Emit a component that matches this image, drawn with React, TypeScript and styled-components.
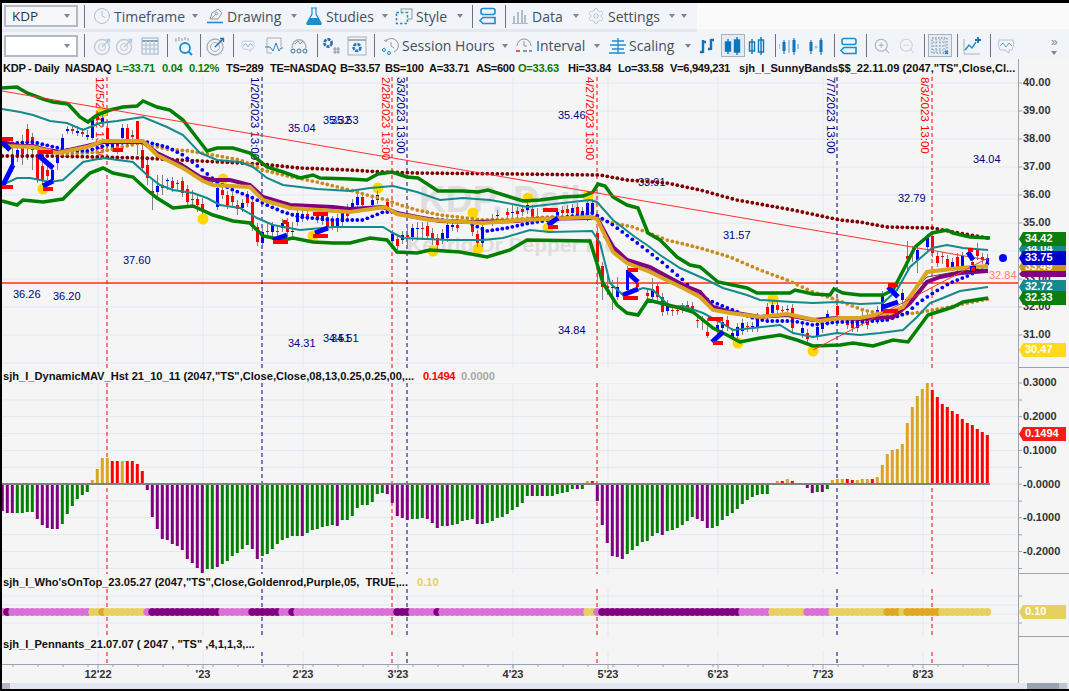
import styled, { createGlobalStyle } from "styled-components";
import { Clock, Settings, ZoomIn, ZoomOut } from "lucide-react";

const GlobalStyle = createGlobalStyle`
	html, body {
		margin: 0;
		padding: 0;
		background: #000;
		overflow: hidden;
	}
`;

const Frame = styled.div`
	width: 1069px;
	height: 691px;
	box-sizing: border-box;
	border-top: 3px solid #000;
	border-left: 2px solid #000;
	border-bottom: 2px solid #000;
	background: #fafafa;
	display: flex;
	flex-direction: column;
	font-family: "Liberation Sans", Arial, sans-serif;
	overflow: hidden;
`;

const ToolRow = styled.div<{ $w?: number; $h: number }>`
	display: flex;
	align-items: center;
	flex: none;
	width: ${(p) => (p.$w ? `${p.$w}px` : "100%")};
	height: ${(p) => p.$h}px;
	box-sizing: border-box;
	padding-left: 2px;
	background: #f1f4f9;
`;

const TopStrip = styled.div`
	height: 3px;
	flex: none;
	background: linear-gradient(to right, #e3e8f1 695px, #f3f5f8 695px);
`;

const Combo = styled.div<{ $bg: string }>`
	width: 74px;
	height: 22px;
	flex: none;
	box-sizing: border-box;
	border: 2px solid #b4bac4;
	background: ${(p) => p.$bg};
	display: flex;
	align-items: center;
	justify-content: space-between;
	padding: 0 6px;
	font-family: "Open Sans", sans-serif;
	font-size: 13.5px;
	color: #2d3540;
`;

const Sep = styled.div<{ $ml: number }>`
	width: 1px;
	height: 23px;
	flex: none;
	margin-left: ${(p) => p.$ml}px;
	background: #6c7480;
`;

const Slot = styled.div<{ $ml: number; $w?: number; $active?: boolean }>`
	width: ${(p) => p.$w ?? 22}px;
	height: 23px;
	flex: none;
	margin-left: ${(p) => p.$ml}px;
	box-sizing: border-box;
	display: flex;
	align-items: center;
	justify-content: center;
	border: ${(p) => (p.$active ? "1px solid #a9b1bc" : "none")};
	background: ${(p) => (p.$active ? "#e6ebf2" : "transparent")};
`;

const Label = styled.span<{ $w: number }>`
	width: ${(p) => p.$w}px;
	flex: none;
	margin-left: 3px;
	white-space: nowrap;
	font-family: "Open Sans", sans-serif;
	font-size: 14px;
	color: #45505c;
`;

const Caret = styled.span<{ $ml: number }>`
	width: 0;
	height: 0;
	flex: none;
	margin-left: ${(p) => p.$ml}px;
	border-left: 3.5px solid transparent;
	border-right: 3.5px solid transparent;
	border-top: 4px solid #7c8590;
`;

const Overflow = styled.div`
	margin-left: 34px;
	display: flex;
	flex-direction: column;
	align-items: center;
	gap: 4px;
	font-size: 12px;
	line-height: 10px;
	color: #7c8590;
`;

const Pane = styled.div<{ $h: number }>`
	height: ${(p) => p.$h}px;
	flex: none;
	display: grid;
	grid-template-columns: 1016px 1fr;
	background: #f5f5f5;
`;

const PlotColumn = styled.div`
	display: flex;
	flex-direction: column;
	min-width: 0;
`;

const Legend = styled.div<{ $h: number }>`
	height: ${(p) => p.$h}px;
	flex: none;
	display: flex;
	align-items: center;
	padding-left: 1px;
	white-space: pre;
	overflow: hidden;
	font-size: 11.1px;
	font-weight: bold;
	color: #111;
`;

const LegendItem = styled.span<{ $w?: number; $c?: string }>`
	flex: none;
	width: ${(p) => (p.$w ? `${p.$w}px` : "auto")};
	color: ${(p) => p.$c ?? "#111"};
	letter-spacing: ${(p) => (p.$w && p.$w < 100 ? "-0.3px" : "0")};
`;

const PlotSvg = styled.svg`
	display: block;
	flex: 1;
	min-height: 0;
	width: 1016px;
`;

const AxisColumn = styled.div<{ $line?: boolean }>`
	box-sizing: border-box;
	border-left: 1px solid #9aa3b2;
	border-bottom: ${(p) => (p.$line ? "1px solid #9aa3b2" : "none")};
	min-height: 0;
`;

const AxisSvg = styled.svg`
	display: block;
	width: 50px;
	height: 100%;
	overflow: visible;
`;

const TimeBar = styled.div`
	height: 19px;
	flex: none;
	display: grid;
	grid-template-columns: 1016px 1fr;
	background: #f5f5f5;
`;

const TimeSvg = styled.svg`
	display: block;
	width: 1016px;
	height: 19px;
`;

const ScrollBar = styled.div`
	height: 6px;
	flex: none;
	display: flex;
	background: #e2e6f0;
`;

const ScrollThumb = styled.div<{ $w: number; $ml: number; $c: string }>`
	width: ${(p) => p.$w}px;
	margin-left: ${(p) => p.$ml}px;
	background: ${(p) => p.$c};
`;

const TickText = styled.text`
	font-family: "Liberation Sans", Arial, sans-serif;
	font-size: 11px;
	font-weight: bold;
	fill: #333;
	dominant-baseline: middle;
`;

const PillText = styled.text`
	font-family: "Liberation Sans", Arial, sans-serif;
	font-size: 11px;
	font-weight: bold;
	fill: #fff;
	dominant-baseline: middle;
`;

const Note = styled.text`
	font-family: "Liberation Sans", Arial, sans-serif;
	font-size: 11px;
	fill: #000080;
	dominant-baseline: middle;
`;

const DateNote = styled.text<{ $c: string }>`
	font-family: "Liberation Sans", Arial, sans-serif;
	font-size: 11.5px;
	fill: ${(p) => p.$c};
	dominant-baseline: middle;
`;

const CloseTag = styled.text`
	font-family: "Liberation Sans", Arial, sans-serif;
	font-size: 11px;
	fill: #ff7f6a;
	dominant-baseline: middle;
`;

const Watermark = styled.text<{ $size: number }>`
	font-family: "Liberation Sans", Arial, sans-serif;
	font-size: ${(p) => p.$size}px;
	font-weight: bold;
	fill: #dedede;
`;

const RED = "#ff0000";
const NAVY = "#000080";
const BLUE = "#1b8ed1";
const PALE = "#b4bcc6";
const GREY = "#8d96a1";
const LINE = "#e1e7f2";
const AXIS = "#9aa3b2";

const monthLines = [98, 203, 303, 398, 513, 608, 718, 823, 923];
const months = ["12'22", "'23", "2'23", "3'23", "4'23", "5'23", "6'23", "7'23", "8'23"];
const dashes: [number, string][] = [
	[107, RED],
	[262, NAVY],
	[392, RED],
	[407, NAVY],
	[597, RED],
	[837, NAVY],
	[932, RED],
];

const barX = (k: number) => 2.3 + 5 * k;

const greenTop =
	"2,88 17,87 27,93 43,99 53,102 68,104 80,117 88,122 97,115 110,110 123,107 137,106 143,101 157,107 170,110 183,120 197,138 207,151 217,148 233,148 250,153 267,167 283,172 300,178 313,175 320,178 350,179 367,180 378,174 392,172 407,177 418,178 438,191 463,191 478,192 488,190 507,196 523,201 540,200 563,197 583,196 593,192 598,184 605,186 613,197 627,205 638,208 648,233 660,240 677,257 690,265 700,267 718,282 747,288 757,293 790,293 795,290 813,294 830,295 834,289 843,293 860,295 883,295 893,290 905,267 915,247 932,233 947,230 953,233 970,237 990,238";
const tealTop =
	"2,109 20,112 33,115 50,121 67,123 83,130 100,123 117,121 143,117 167,127 183,135 200,153 217,160 240,162 253,167 267,178 283,185 317,189 350,191 370,188 393,186 417,192 440,200 463,198 490,200 507,203 527,207 563,203 590,200 597,202 613,220 635,237 647,245 660,255 680,268 707,280 723,288 747,295 760,300 793,302 813,303 837,302 860,304 883,303 897,290 910,267 932,248 947,245 963,248 988,250";
const tealLow =
	"2,185 17,178 30,178 50,182 63,180 83,162 103,158 133,162 147,175 160,185 173,190 193,193 207,198 220,205 240,208 257,218 273,225 300,230 333,227 350,227 383,227 393,233 403,238 450,240 483,240 503,238 530,230 550,232 592,231 600,243 610,283 623,295 643,288 653,290 670,307 683,306 703,313 720,322 733,330 753,328 780,325 793,333 813,337 837,333 860,335 880,333 903,330 917,317 930,303 943,298 960,291 988,287";
const greenLow =
	"2,201 17,205 23,200 43,202 63,199 77,185 90,173 103,168 113,173 133,177 147,190 157,198 173,208 193,206 213,215 233,221 250,223 263,236 283,240 293,238 313,242 333,243 350,243 370,238 387,240 397,252 417,253 430,250 460,252 487,257 510,250 527,240 590,241 603,283 617,305 627,313 638,315 648,300 660,303 680,308 693,312 713,328 727,335 740,342 760,338 780,335 797,340 813,346 840,345 853,343 873,346 893,340 908,342 928,315 953,307 963,302 988,298";
const purpleLine =
	"2,142 20,146 33,146 47,150 60,152 87,146 103,142 143,142 157,153 180,164 200,177 213,180 230,180 250,185 263,197 290,205 333,207 350,209 383,207 397,213 417,217 440,221 473,222 517,221 537,219 590,218 597,218 613,247 627,260 650,267 683,285 700,292 713,307 730,312 760,317 787,315 813,320 837,318 860,319 893,317 910,303 927,282 940,277 960,273 988,271";
const goldLine =
	"2,146 33,147 57,153 87,147 103,141 143,141 157,155 183,168 203,181 213,185 250,187 263,200 290,208 350,212 385,207 397,214 430,220 483,223 523,220 590,217 597,219 613,252 627,263 650,272 683,288 700,297 713,310 730,313 760,317 787,314 820,321 840,318 860,318 890,312 903,307 927,272 960,268 988,266";
const blackLines = [
	"157,154 183,166 203,179 213,183",
	"255,191 263,198 290,207",
	"603,236 613,250 627,262 650,270 683,287 700,295 713,308",
	"905,300 927,277 960,271 988,269",
];
const blueDots =
	"2,144 33,142 67,150 87,151 100,147 113,143 147,142 167,147 183,155 200,168 217,182 233,190 253,198 267,205 283,212 300,217 333,220 363,220 383,212 393,212 403,215 420,218 467,222 487,231 507,228 530,223 567,217 593,213 613,225 640,245 663,263 683,280 697,295 720,305 753,318 767,321 793,321 813,325 837,322 860,322 887,320 907,313 918,303 933,293 950,283 970,275 988,263";
const orangeDots =
	"60,154 100,152 140,143 167,149 190,151 213,155 240,160 263,170 283,175 317,182 350,190 367,195 387,200 400,205 417,210 440,215 467,218 483,220 517,219 550,217 593,217 613,223 633,227 667,240 700,248 730,257 760,270 787,280 813,292 837,300 863,310 877,313 897,315 915,313 933,310 950,307 967,303 988,299";
const maroonDots =
	"2,156 50,156 143,158 200,161 260,164 300,168 350,170 383,172 417,173 517,174 600,175 627,180 667,183 700,190 737,200 793,210 840,220 860,222 887,227 933,228 953,232 970,235 988,238";

// one dot per bar, read off the polyline
const dotsOn = (line: string) => {
	const pts = line.split(" ").map((p) => p.split(",").map(Number));
	const out: [number, number][] = [];
	for (let k = 0; k < 198; k++) {
		const x = barX(k);
		for (let i = 1; i < pts.length; i++) {
			if (x >= pts[i - 1][0] && x <= pts[i][0]) {
				const t = (x - pts[i - 1][0]) / (pts[i][0] - pts[i - 1][0]);
				out.push([x, pts[i - 1][1] + t * (pts[i][1] - pts[i - 1][1])]);
				break;
			}
		}
	}
	return out;
};

const yellows = [
	[43, 189], [203, 219], [223, 179], [102, 112], [313, 236], [378, 188], [433, 251], [473, 213],
	[478, 249], [528, 198], [548, 228], [588, 196], [773, 299], [738, 343], [813, 351],
];

// flag bars: x1, x2, y
const flagBars = [
	[2, 13, 139], [2, 13, 187], [38, 53, 152], [43, 53, 189], [113, 123, 150], [273, 288, 242],
	[283, 287, 222], [313, 328, 214], [313, 328, 236], [543, 558, 210], [548, 558, 227],
	[628, 638, 270], [623, 638, 298], [708, 723, 319], [713, 723, 343], [888, 898, 285],
	[883, 898, 311], [968, 973, 250],
];
const flagPoles = [
	[2, 142, 10, 150], [3, 185, 13, 165], [38, 155, 53, 168], [43, 186, 53, 181], [273, 240, 287, 235],
	[315, 233, 328, 228], [548, 225, 558, 218], [628, 273, 638, 282], [623, 295, 638, 289],
	[712, 342, 723, 332], [888, 287, 898, 297], [883, 307, 898, 302], [968, 252, 973, 260],
];

// x, top, bottom, colour, wick top, wick bottom
type Candle = [number, number, number, "r" | "b", number?, number?];
const candles: Candle[] = [
	[13, 155, 165, "b", 148, 172], [18, 150, 157, "b", 142, 162], [23, 147, 154, "r", 135, 165],
	[28, 129, 143, "r", 124, 160], [33, 137, 150, "r", 133, 170], [38, 155, 180, "r", 150, 183],
	[43, 166, 180, "r"], [48, 170, 176, "r"], [53, 170, 180, "b"], [58, 153, 163, "b", 150, 170],
	[63, 138, 150, "b"], [68, 129, 131, "b", 126, 134], [73, 129, 131, "r", 126, 134], [78, 131, 133, "b", 126, 136],
	[83, 132, 134, "r", 128, 137], [88, 135, 137, "b", 130, 140], [93, 120, 138, "b", 118, 140],
	[98, 115, 120, "r"], [103, 118, 123, "b"], [108, 128, 145, "r", 120, 148], [113, 143, 148, "b"],
	[118, 143, 150, "r"], [123, 128, 138, "b"], [128, 128, 140, "r"], [133, 135, 137, "r", 130, 142],
	[138, 121, 142, "r", 121, 155], [143, 150, 168, "r", 140, 172], [148, 165, 178, "r", 160, 185],
	[153, 191, 193, "r", 180, 210], [158, 186, 192, "b", 175, 198], [163, 185, 188, "r", 175, 195],
	[168, 180, 181, "b", 178, 190], [173, 181, 188, "r"], [178, 183, 184, "r", 180, 190], [183, 181, 193, "r"],
	[188, 189, 202, "r"], [193, 199, 200, "r", 190, 205], [198, 199, 205, "r", 195, 212], [203, 204, 210, "r", 198, 214],
	[218, 188, 207, "b", 185, 210], [223, 190, 195, "r"], [228, 195, 205, "r"], [233, 196, 202, "r"],
	[238, 205, 209, "r", 200, 215], [243, 203, 208, "b"], [248, 195, 203, "r"], [253, 202, 227, "r"],
	[258, 227, 242, "r"], [263, 232, 243, "b", 228, 245], [268, 231, 232, "r", 222, 238], [273, 225, 232, "b", 222, 240],
	[278, 231, 232, "r"], [283, 223, 228, "b"], [288, 222, 232, "r"], [293, 231, 232, "b", 222, 240],
	[298, 213, 222, "b", 208, 226], [303, 214, 218, "b"], [308, 214, 217, "r"], [318, 214, 219, "r"], [323, 215, 221, "b"],
	[328, 217, 227, "r"], [333, 220, 226, "r"], [338, 218, 228, "b"], [343, 210, 222, "b"], [348, 208, 216, "r"],
	[353, 203, 208, "b"], [358, 197, 205, "b"], [363, 197, 205, "r"], [373, 200, 205, "b"], [378, 195, 200, "b"],
	[388, 202, 207, "r"], [393, 234, 241, "b", 230, 245], [398, 239, 246, "r", 235, 250], [403, 235, 240, "b"],
	[408, 235, 237, "r", 228, 245], [413, 228, 237, "b"], [418, 228, 229, "b", 222, 240], [423, 228, 229, "r", 222, 240],
	[428, 226, 236, "r"], [433, 233, 240, "r", 228, 245], [438, 238, 245, "r"], [443, 233, 240, "b"],
	[448, 225, 238, "b"], [453, 225, 227, "b"], [458, 225, 228, "r"], [473, 225, 232, "r"], [478, 234, 243, "r"],
	[483, 227, 243, "b"], [493, 218, 222, "r"], [498, 215, 216, "b", 210, 222], [508, 212, 215, "r"], [513, 212, 213, "b", 205, 218],
	[518, 211, 214, "r"], [523, 209, 212, "r"], [528, 205, 210, "b"], [533, 209, 217, "r"], [538, 216, 217, "r", 208, 222],
	[558, 212, 217, "b"], [563, 210, 213, "r"], [568, 209, 213, "r"], [573, 208, 213, "b"], [578, 207, 215, "r"],
	[583, 211, 214, "b"], [588, 203, 217, "b"], [593, 203, 212, "b"],
	[598, 233, 262, "r", 228, 285], [603, 266, 287, "r", 262, 300], [608, 286, 288, "r", 275, 295], [613, 287, 288, "b", 280, 310],
	[618, 287, 297, "b", 277, 300], [628, 270, 290, "b"], [638, 283, 287, "r"], [648, 293, 296, "r"], [653, 290, 297, "b", 278, 300],
	[658, 286, 297, "r"], [663, 297, 312, "r"], [668, 304, 311, "b"], [673, 310, 311, "r", 305, 316], [678, 310, 311, "r", 306, 315],
	[683, 307, 309, "r"], [688, 305, 308, "r"], [693, 306, 310, "r"], [698, 320, 321, "r", 316, 328], [703, 320, 321, "r", 316, 330],
	[708, 332, 336, "r", 318, 338], [718, 325, 331, "b"], [723, 322, 328, "b"], [728, 320, 327, "r"], [733, 333, 338, "b", 328, 340],
	[738, 327, 336, "b"], [743, 323, 331, "b"], [748, 326, 327, "r", 322, 332], [753, 326, 327, "b", 322, 332], [758, 317, 328, "b"],
	[768, 307, 315, "r"], [773, 305, 313, "b"], [778, 305, 310, "r"], [783, 310, 311, "r"], [788, 309, 310, "b", 305, 314], [793, 308, 328, "r"],
	[803, 328, 333, "b", 325, 338], [808, 333, 339, "r"], [818, 327, 337, "b", 325, 340], [823, 323, 329, "b"], [828, 314, 322, "b"],
	[838, 306, 315, "r"], [848, 322, 325, "r"], [853, 322, 328, "r"], [858, 320, 328, "b"], [863, 316, 322, "b"], [868, 317, 325, "r"],
	[878, 310, 320, "b"], [883, 295, 313, "b"], [903, 293, 300, "b"], [908, 256, 259, "r", 241, 270], [913, 252, 253, "r", 246, 262],
	[918, 250, 260, "b", 245, 273], [928, 238, 247, "b"], [933, 236, 253, "r"], [938, 256, 263, "r"], [943, 256, 257, "r", 252, 264],
	[948, 259, 267, "r"], [953, 262, 267, "b"], [958, 257, 267, "r"], [963, 256, 266, "b"], [973, 262, 265, "r"],
	[978, 250, 256, "r", 243, 260], [983, 257, 260, "r"], [988, 258, 262, "b"],
];

const histColors: Record<string, string> = { P: "#800080", G: "#008000", O: "#daa520", R: "#ff0000" };
const hist = (
	"P-27 P-29 P-29 G-29 G-29 G-28 G-28 P-35 P-41 P-44 P-45 P-45 G-40 G-30 G-22 G-15 G-11 G-8 " +
	"O4 O15 O26 O26 R23 R23 O23 R23 R23 R20 R13 P-6 P-33 P-45 P-55 P-56 P-60 P-62 P-66 P-75 P-79 P-84 P-89 " +
	"G-85 G-85 P-83 G-80 G-77 G-72 G-69 G-65 G-61 P-65 P-75 G-72 G-70 G-65 G-60 G-56 G-54 G-52 G-52 P-52 " +
	"G-49 G-46 G-45 G-43 G-42 G-41 P-42 G-36 G-36 G-32 G-24 G-21 G-21 G-18 G-10 G-9 P-10 P-19 P-32 " +
	"P-34 P-36 G-35 G-35 G-34 P-35 P-39 P-44 G-42 P-42 G-41 G-40 G-37 G-36 G-35 P-40 P-40 G-39 G-37 G-34 G-33 " +
	"G-30 G-26 G-23 G-19 G-12 P-12 G-12 P-12 G-12 G-12 G-10 G-9 G-8 G-5 P-5 G-5 " +
	"O3 R3 P-17 P-41 P-59 P-72 P-73 P-75 G-70 G-66 G-62 G-58 G-57 G-52 G-49 P-51 G-47 G-46 G-44 G-41 G-37 G-33 " +
	"P-35 P-37 P-44 G-44 G-42 G-36 G-32 G-29 G-25 G-20 G-16 G-13 G-11 G-10 G-10 O1 O3 R3 O5 R3 R1 R1 P-4 P-9 G-8 P-8 G-5 " +
	"O4 O5 O5 R5 R4 O4 O5 O5 R5 O7 O19 O30 O34 O35 O40 O61 O77 O88 O95 O102 " +
	"R94 R87 R80 R77 R73 R70 R65 R61 R59 R55 R52 R49"
)
	.split(" ")
	.map((s) => ({ c: histColors[s[0]], v: Number(s.slice(1)) }));

// who's on top beads: colour starts at x
const beadRuns: [number, string][] = [
	[0, "#da70d6"], [5, "#800080"], [10, "#da70d6"], [90, "#e6d060"], [100, "#e0a820"], [105, "#e6d060"],
	[145, "#da70d6"], [150, "#800080"], [220, "#da70d6"], [250, "#800080"], [280, "#da70d6"], [290, "#800080"],
	[295, "#da70d6"], [395, "#800080"], [410, "#da70d6"], [436, "#800080"], [440, "#da70d6"], [585, "#e6d060"],
	[595, "#da70d6"], [600, "#800080"], [741, "#da70d6"], [770, "#e6d060"], [805, "#da70d6"], [830, "#e6d060"],
	[885, "#e0a820"], [900, "#e6d060"], [905, "#e0a820"], [940, "#e6d060"],
];
const beadColor = (x: number) => {
	let c = beadRuns[0][1];
	for (const [from, colour] of beadRuns) if (x >= from) c = colour;
	return c;
};

const notes: [number, number, string][] = [
	[288, 129, "35.04"], [323, 121, "35.32"], [331, 121, "35.53"], [558, 116, "35.46"], [638, 183, "33.91"],
	[723, 236, "31.57"], [898, 199, "32.79"], [973, 160, "34.04"], [123, 261, "37.60"], [13, 295, "36.26"],
	[53, 297, "36.20"], [288, 344, "34.31"], [323, 339, "34.51"], [331, 339, "34.51"], [558, 331, "34.84"],
];
const dateNotes: [number, string, string][] = [
	[99, "12/5/2022 13:00", RED], [254, "1/20/2023 13:00", NAVY], [385, "2/28/2023 13:00", RED],
	[400, "3/3/2023 13:00", NAVY], [589, "4/27/2023 13:00", RED], [830, "7/7/2023 13:00", NAVY], [924, "8/3/2023 13:00", RED],
];

// pills in paint order: y, text, colour
const pricePills: [number, string, string][] = [
	[249, "34.04", "#148a8a"], [267, "33.49", "#c8961e"], [239, "34.42", "#0a7d0a"],
	[258, "33.75", "#0000cc"], [287, "32.72", "#148a8a"], [298, "32.33", "#0a7d0a"], [350, "30.47", "#ffd91a"],
];

function Grid(props: { top: number; bottom: number; ys: number[] }) {
	return (
		<g>
			{monthLines.map((x) => (
				<line key={x} x1={x} x2={x} y1={props.top} y2={props.bottom} stroke={LINE} />
			))}
			{props.ys.map((y) => (
				<line key={y} x1={2} x2={1018} y1={y} y2={y} stroke={LINE} />
			))}
		</g>
	);
}

function Dashes(props: { top: number; bottom: number }) {
	return (
		<g>
			{dashes.map(([x, c]) => (
				<line key={x} x1={x} x2={x} y1={props.top} y2={props.bottom} stroke={c} strokeDasharray="4 3" />
			))}
		</g>
	);
}

function Dots(props: { line: string; color: string }) {
	return (
		<g>
			{dotsOn(props.line).map(([x, y]) => (
				<circle key={x} cx={x} cy={y} r={1.9} fill={props.color} />
			))}
		</g>
	);
}

function Pill(props: { y: number; text: string; color: string }) {
	const { y, text, color } = props;
	return (
		<g>
			<path d={`M1019 ${y} l4 -7 h43 v14 h-43 z`} fill={color} />
			<PillText x={1025} y={y + 0.5}>
				{text}
			</PillText>
		</g>
	);
}

function Tick(props: { y: number; text?: string }) {
	return (
		<g>
			<line x1={1018} x2={1022} y1={props.y} y2={props.y} stroke={AXIS} />
			{props.text && (
				<TickText x={1023} y={props.y + 0.5}>
					{props.text}
				</TickText>
			)}
		</g>
	);
}

function MainPlot() {
	const ys = Array.from({ length: 11 }, (_, i) => 83 + i * 28);
	return (
		<PlotSvg viewBox="2 77 1016 291">
			<Grid top={77} bottom={368} ys={ys} />
			<Watermark x={419} y={212} $size={37}>
				KDP, Daily
			</Watermark>
			<Watermark x={407} y={252} $size={21}>
				Keurig Dr Pepper Inc
			</Watermark>
			<line x1={2} x2={1018} y1={283} y2={283} stroke="#ff6347" strokeWidth={2} />
			<Dashes top={77} bottom={368} />
			{dateNotes.map(([x, text, c]) => (
				<DateNote key={text} $c={c} transform={`translate(${x},77) rotate(90)`}>
					{text}
				</DateNote>
			))}
			{notes.map(([x, y, text], i) => (
				<Note key={i} x={x} y={y}>
					{text}
				</Note>
			))}
			{yellows.map(([x, y]) => (
				<circle key={x} cx={x} cy={y} r={5.5} fill="#ffd700" />
			))}
			{candles.map(([x, t, b, c, wt, wb]) => (
				<g key={x}>
					<line x1={x - 0.5} x2={x - 0.5} y1={wt ?? t - 4} y2={wb ?? b + 4} stroke="#808080" />
					<rect x={x - 2} y={t} width={3} height={b - t} fill={c === "r" ? RED : "#0000ff"} />
				</g>
			))}
			<Dots line={maroonDots} color="#800000" />
			<Dots line={orangeDots} color="#c98a1b" />
			<polyline points={tealTop} fill="none" stroke="#148a8a" strokeWidth={2} />
			<polyline points={tealLow} fill="none" stroke="#148a8a" strokeWidth={2} />
			<polyline points={greenTop} fill="none" stroke="#008000" strokeWidth={3.5} />
			<polyline points={greenLow} fill="none" stroke="#008000" strokeWidth={3.5} />
			<Dots line={blueDots} color="#0000ff" />
			<polyline points={purpleLine} fill="none" stroke="#800080" strokeWidth={4} />
			{blackLines.map((l) => (
				<polyline key={l} points={l} fill="none" stroke="#222" strokeWidth={0.8} />
			))}
			<polyline points={goldLine} fill="none" stroke="#daa520" strokeWidth={4} />
			<line x1={2} y1={91} x2={988} y2={260} stroke="#ff3030" />
			<line x1={813} y1={350} x2={988} y2={258} stroke="#ff3030" />
			{flagPoles.map(([x1, y1, x2, y2], i) => (
				<line key={i} x1={x1} y1={y1} x2={x2} y2={y2} stroke="#0000ff" strokeWidth={5} />
			))}
			{flagBars.map(([x1, x2, y], i) => (
				<rect key={i} x={x1} y={y - 2} width={x2 - x1} height={4} fill={RED} />
			))}
			<rect x={970.5} y={266.5} width={5} height={5} fill={RED} stroke="#0000ff" />
			<circle cx={1003} cy={258} r={4} fill="#0000ff" />
			<CloseTag x={989} y={276}>
				32.84
			</CloseTag>
		</PlotSvg>
	);
}

function HistPlot() {
	const ys = Array.from({ length: 12 }, (_, i) => 383 + i * 16.85);
	return (
		<PlotSvg viewBox="2 383 1016 191">
			<Grid top={383} bottom={574} ys={ys} />
			<Dashes top={383} bottom={574} />
			{hist.map((b, k) => (
				<rect
					key={k}
					x={barX(k) - 1.5}
					y={b.v > 0 ? 484 - b.v : 484}
					width={3}
					height={Math.abs(b.v)}
					fill={b.c}
				/>
			))}
			<rect x={2} y={483} width={988} height={2} fill="#808080" />
		</PlotSvg>
	);
}

function BeadPlot() {
	return (
		<PlotSvg viewBox="2 589 1016 48">
			<Grid top={589} bottom={637} ys={[596, 605, 614, 623]} />
			<Dashes top={589} bottom={637} />
			{hist.map((_, k) => (
				<circle key={k} cx={barX(k)} cy={612} r={4} fill={beadColor(barX(k))} />
			))}
		</PlotSvg>
	);
}

function PennantPlot() {
	return (
		<PlotSvg viewBox="2 651 1016 13">
			<Grid top={651} bottom={664} ys={[]} />
			<Dashes top={652} bottom={664} />
		</PlotSvg>
	);
}

function PriceAxis() {
	const prices = ["40.00", "39.00", "38.00", "37.00", "36.00", "35.00", "34.00", "33.00", "32.00", "31.00"];
	return (
		<AxisSvg viewBox="1019 59 50 308">
			{prices.map((p, i) => (
				<Tick key={p} y={83 + i * 28} text={p} />
			))}
			{pricePills.map(([y, t, c]) => (
				<Pill key={t} y={y} text={t} color={c} />
			))}
			<path d="M1019 274 l3 -3 h44 v6 h-44 z" fill="#800080" />
		</AxisSvg>
	);
}

function HistAxis() {
	const labels = ["0.3000", "0.2000", "0.1000", "-0.0000", "-0.1000", "-0.2000"];
	return (
		<AxisSvg viewBox="1019 368 50 205">
			{labels.map((p, i) => (
				<g key={p}>
					<Tick y={383 + i * 33.7} text={p} />
					<Tick y={400 + i * 33.7} />
				</g>
			))}
			<Pill y={434} text="0.1494" color="#ff1a1a" />
		</AxisSvg>
	);
}

function BeadAxis() {
	return (
		<AxisSvg viewBox="1019 574 50 62">
			<Tick y={596} />
			<Tick y={623} />
			<Pill y={612} text="0.10" color="#e6d060" />
		</AxisSvg>
	);
}

function TimeAxis() {
	const ticks = Array.from({ length: 40 }, (_, i) => 13 + i * 25);
	return (
		<TimeSvg viewBox="2 664 1016 19">
			<line x1={2} x2={1018} y1={664.5} y2={664.5} stroke={AXIS} />
			{ticks.map((x) => (
				<line key={x} x1={x} x2={x} y1={664} y2={667} stroke={AXIS} />
			))}
			{monthLines.map((x, i) => (
				<g key={x}>
					<line x1={x} x2={x} y1={664} y2={669} stroke={AXIS} />
					<TickText x={x} y={675} textAnchor="middle">
						{months[i]}
					</TickText>
				</g>
			))}
		</TimeSvg>
	);
}

const Ico = styled.svg`
	display: block;
	flex: none;
	fill: none;
`;

function DrawingIcon() {
	return (
		<Ico width={20} height={18} viewBox="0 0 20 18">
			<path d="M5 12 L7 6 L13 2 L17 6 L13 12 Z" stroke={GREY} />
			<path d="M7 11 L11 7" stroke={GREY} />
			<circle cx={11.5} cy={6.5} r={1.2} stroke={GREY} />
			<path d="M2 15.5 H18" stroke={BLUE} strokeWidth={1.6} />
		</Ico>
	);
}

function FlaskIcon() {
	return (
		<Ico width={18} height={20} viewBox="0 0 18 20">
			<path d="M6 2 H12 M7 2 V8 L2 17 Q1.5 18.5 3 18.5 H15 Q16.5 18.5 16 17 L11 8 V2" stroke={BLUE} strokeWidth={1.2} />
			<path d="M4.5 12 H13.5 L16 17 Q16.5 18.5 15 18.5 H3 Q1.5 18.5 2 17 Z" fill={BLUE} />
		</Ico>
	);
}

function StyleIcon() {
	return (
		<Ico width={18} height={18} viewBox="0 0 18 18">
			<rect x={6} y={2} width={11} height={10} stroke={GREY} />
			<rect x={1.5} y={5.5} width={11} height={11} stroke={BLUE} strokeWidth={1.5} strokeDasharray="2.5 2" fill="#f1f4f9" />
		</Ico>
	);
}

function StackIcon(props: { size?: number }) {
	return (
		<Ico width={props.size ?? 20} height={18} viewBox="0 0 20 18">
			<rect x={3} y={1.5} width={14} height={6} rx={2} stroke={BLUE} strokeWidth={1.6} />
			<path d="M17 10.5 H5 L2 13.5 L5 16.5 H17 Z" stroke={BLUE} strokeWidth={1.6} />
		</Ico>
	);
}

function DataIcon() {
	return (
		<Ico width={18} height={18} viewBox="0 0 18 18">
			<path d="M3 16 V9 M7 16 V5 M11 16 V3 M14 16 V8" stroke={PALE} strokeWidth={2} />
			<path d="M1 16.5 H17" stroke={PALE} />
		</Ico>
	);
}

function RadarIcon() {
	return (
		<Ico width={20} height={20} viewBox="0 0 20 20">
			<circle cx={9} cy={11} r={7.5} stroke="#c4cbd4" strokeWidth={1.4} />
			<circle cx={9} cy={11} r={3.5} stroke="#c4cbd4" />
			<path d="M9 11 L16 4 M13.5 3.5 H16.5 V6.5" stroke="#aac8de" strokeWidth={1.3} />
		</Ico>
	);
}

function CalendarIcon() {
	return (
		<Ico width={18} height={18} viewBox="0 0 18 18">
			<rect x={1} y={1} width={16} height={16} stroke="#9ab0c4" />
			<path d="M1 4 H17" stroke="#8aa2b8" strokeWidth={2} />
			<path d="M5 4 V17 M9 4 V17 M13 4 V17 M1 8 H17 M1 12 H17" stroke="#bccbd8" strokeWidth={1.5} />
		</Ico>
	);
}

function PriceQueryIcon() {
	return (
		<Ico width={20} height={20} viewBox="0 0 20 20">
			<path d="M2 2 V6 M5 1 V5 M8 2 V5 M11 1 V4 M14 2 V5" stroke={GREY} />
			<circle cx={11} cy={12} r={5} stroke={BLUE} strokeWidth={1.8} />
			<path d="M14.5 15.5 L18 19" stroke={BLUE} strokeWidth={2} />
		</Ico>
	);
}

function GaugeIcon() {
	return (
		<Ico width={20} height={20} viewBox="0 0 20 20">
			<circle cx={9} cy={11} r={8} stroke="#a8b0ba" strokeWidth={1.3} />
			<circle cx={9} cy={11} r={4.5} stroke="#a8b0ba" />
			<path d="M9 11 L17 3" stroke="#2f6ea8" strokeWidth={1.6} />
			<path d="M14 2.5 L17.5 2.5 L17.5 6" stroke="#2f6ea8" strokeWidth={1.3} />
		</Ico>
	);
}

function BubbleWaveIcon(props: { wide?: boolean }) {
	return (
		<Ico width={props.wide ? 20 : 16} height={18} viewBox="0 0 20 18">
			<path d="M3 3 H17 Q19 8 16 13 L13 13 L13 16 L9 13 H4 Q1 8 3 3 Z" stroke="#b8c4d0" />
			<path d="M4 9 L7 6 L10 10 L13 6 L16 9" stroke="#6f9fc4" />
		</Ico>
	);
}

function DocWaveIcon() {
	return (
		<Ico width={20} height={20} viewBox="0 0 20 20">
			<path d="M3 2 H17 V11 M3 2 V17 H8" stroke="#a8b0ba" />
			<path d="M1 11 H6 L9 15 L12 7 L15 15 L17 12 H19" stroke="#2f7eb5" />
		</Ico>
	);
}

function NodesIcon() {
	return (
		<Ico width={20} height={20} viewBox="0 0 20 20">
			<path d="M3 12 C3 1 17 1 17 12" stroke="#a8b0ba" strokeWidth={1.5} />
			<path d="M6 8 L9 5 L11 8 L14 5" stroke="#6f9fc4" />
			<circle cx={4} cy={15} r={2} stroke="#2f6ea8" />
			<circle cx={10} cy={15} r={2} stroke="#2f6ea8" />
			<circle cx={16} cy={15} r={2} stroke="#2f6ea8" />
		</Ico>
	);
}

function GearHashIcon() {
	return (
		<Ico width={20} height={20} viewBox="0 0 20 20">
			<circle cx={7} cy={7} r={3.6} stroke="#2f6ea8" strokeWidth={2.6} strokeDasharray="3 1" />
			<path d="M14 11 V18 M17 11 V18 M12 13 H19 M12 16 H19" stroke={GREY} />
		</Ico>
	);
}

function GearBoxIcon() {
	return (
		<Ico width={20} height={20} viewBox="0 0 20 20">
			<rect x={1} y={1} width={18} height={18} stroke="#a8b0ba" />
			<path d="M1 4 H19" stroke="#a8b0ba" strokeWidth={2} />
			<circle cx={10} cy={11.5} r={3.4} stroke="#1f7ac0" strokeWidth={2.6} strokeDasharray="3 1" />
		</Ico>
	);
}

function SessionIcon() {
	return (
		<Ico width={18} height={20} viewBox="0 0 18 20">
			<path d="M5 5 A7 7 0 1 1 13 16" stroke={GREY} />
			<path d="M10 6 V10 L13 12" stroke={GREY} />
			<path d="M3 4 L5 5.5 L6 3" stroke={GREY} />
			<circle cx={3} cy={14} r={1.5} stroke={BLUE} />
			<circle cx={8} cy={17} r={1.5} stroke={BLUE} />
		</Ico>
	);
}

function IntervalIcon() {
	return (
		<Ico width={18} height={20} viewBox="0 0 18 20">
			<path d="M2 10 A7 7 0 1 1 16 10" stroke={GREY} />
			<path d="M9 5 V10 H12" stroke={GREY} />
			<path d="M1 15 H5" stroke="#ef5a3c" strokeWidth={2} />
			<path d="M8 15 H12" stroke={GREY} strokeWidth={2} />
			<path d="M14 15 H17" stroke={GREY} strokeWidth={2} />
		</Ico>
	);
}

function ScalingIcon() {
	return (
		<Ico width={18} height={20} viewBox="0 0 18 20">
			<path d="M10 2 V18 M4 5 H16 M2 9 H18 M4 13 H16 M1 17 H17" stroke={BLUE} strokeWidth={1.3} />
		</Ico>
	);
}

function StepBarIcon() {
	return (
		<Ico width={20} height={20} viewBox="0 0 20 20">
			<path d="M6 4 V17 M3 16 H6 M6 6 H9" stroke="#0f74b8" strokeWidth={2.4} />
			<path d="M14 3 V14 M11 13 H14 M14 4 H17" stroke="#0f74b8" strokeWidth={2.4} />
		</Ico>
	);
}

function CandleIcon(props: { hollow?: boolean }) {
	const fill = props.hollow ? "none" : "#0f74b8";
	return (
		<Ico width={20} height={20} viewBox="0 0 20 20">
			<path d="M5 3 V18 M14 1 V19" stroke="#0f74b8" strokeWidth={1.4} />
			<rect x={2.5} y={6} width={5} height={9} fill={fill} stroke="#0f74b8" strokeWidth={1.4} />
			<rect x={11.5} y={4} width={5} height={12} fill={fill} stroke="#0f74b8" strokeWidth={1.4} />
		</Ico>
	);
}

function SpreadCandleIcon(props: { arrows?: boolean }) {
	return (
		<Ico width={20} height={20} viewBox="0 0 20 20">
			<path d="M5 4 V18 M15 2 V19" stroke="#2f7eb5" strokeWidth={1.2} />
			<rect x={3.5} y={6} width={3} height={9} fill="#0f74b8" />
			<rect x={13.5} y={4} width={3} height={12} fill="#0f74b8" />
			{props.arrows ? (
				<path d="M8 11 L10 9 L12 11 L10 13 Z" fill="#b4c4d4" />
			) : (
				<path d="M10 4 V17 M0 8 V13 M19 8 V13" stroke="#8fb8d6" strokeWidth={1.5} />
			)}
		</Ico>
	);
}

function DotGridIcon() {
	return (
		<Ico width={18} height={18} viewBox="0 0 18 18">
			<rect x={1} y={1} width={15} height={15} stroke="#4f7ea8" strokeDasharray="1.5 1.5" />
			<path d="M5 2 V15 M9 2 V15 M13 2 V15 M2 5 H15 M2 9 H15 M2 13 H15" stroke="#7fa0bd" strokeDasharray="1.5 1.5" />
			<path d="M14 14 L17 17 M17 14 L14 17" stroke="#1f7ac0" strokeWidth={1.2} />
		</Ico>
	);
}

function ChartPlusIcon() {
	return (
		<Ico width={20} height={20} viewBox="0 0 20 20">
			<path d="M2 3 V18 H18" stroke="#a8b0ba" />
			<path d="M3 14 L7 9 L10 12 L14 6" stroke={BLUE} strokeWidth={1.4} />
			<path d="M16 1 V7 M13 4 H19" stroke="#0f74b8" strokeWidth={1.8} />
		</Ico>
	);
}

function TopToolbar() {
	return (
		<ToolRow $w={695} $h={26}>
			<Combo $bg="#f6f7f9">
				KDP
				<Caret $ml={0} />
			</Combo>
			<Sep $ml={6} />
			<Slot $ml={8} $w={18}>
				<Clock size={18} color={PALE} strokeWidth={1.3} />
			</Slot>
			<Label $w={71}>Timeframe</Label>
			<Caret $ml={7} />
			<Slot $ml={8} $w={18}>
				<DrawingIcon />
			</Slot>
			<Label $w={55}>Drawing</Label>
			<Caret $ml={9} />
			<Slot $ml={8} $w={18}>
				<FlaskIcon />
			</Slot>
			<Label $w={48}>Studies</Label>
			<Caret $ml={8} />
			<Slot $ml={7} $w={18}>
				<StyleIcon />
			</Slot>
			<Label $w={33}>Style</Label>
			<Caret $ml={8} />
			<Sep $ml={9} />
			<Slot $ml={4}>
				<StackIcon />
			</Slot>
			<Sep $ml={6} />
			<Slot $ml={5} $w={18}>
				<DataIcon />
			</Slot>
			<Label $w={32}>Data</Label>
			<Caret $ml={9} />
			<Slot $ml={8} $w={18}>
				<Settings size={18} color={PALE} strokeWidth={1.2} />
			</Slot>
			<Label $w={53}>Settings</Label>
			<Caret $ml={8} />
			<Caret $ml={6} />
		</ToolRow>
	);
}

function SecondToolbar() {
	return (
		<ToolRow $h={27}>
			<Combo $bg="#fff">
				<span />
				<Caret $ml={0} />
			</Combo>
			<Sep $ml={6} />
			<Slot $ml={7}>
				<RadarIcon />
			</Slot>
			<Slot $ml={0}>
				<RadarIcon />
			</Slot>
			<Slot $ml={3}>
				<CalendarIcon />
			</Slot>
			<Sep $ml={6} />
			<Slot $ml={5}>
				<PriceQueryIcon />
			</Slot>
			<Sep $ml={5} />
			<Slot $ml={4}>
				<GaugeIcon />
			</Slot>
			<Sep $ml={6} />
			<Slot $ml={3}>
				<BubbleWaveIcon />
			</Slot>
			<Slot $ml={4}>
				<DocWaveIcon />
			</Slot>
			<Slot $ml={3}>
				<NodesIcon />
			</Slot>
			<Sep $ml={7} />
			<Slot $ml={2}>
				<GearHashIcon />
			</Slot>
			<Slot $ml={4}>
				<GearBoxIcon />
			</Slot>
			<Sep $ml={6} />
			<Slot $ml={6} $w={18}>
				<SessionIcon />
			</Slot>
			<Label $w={92}>Session Hours</Label>
			<Caret $ml={8} />
			<Slot $ml={7} $w={18}>
				<IntervalIcon />
			</Slot>
			<Label $w={50}>Interval</Label>
			<Caret $ml={8} />
			<Slot $ml={8} $w={18}>
				<ScalingIcon />
			</Slot>
			<Label $w={47}>Scaling</Label>
			<Caret $ml={9} />
			<Slot $ml={5}>
				<StepBarIcon />
			</Slot>
			<Slot $ml={3} $w={24} $active>
				<CandleIcon />
			</Slot>
			<Slot $ml={1}>
				<CandleIcon hollow />
			</Slot>
			<Sep $ml={7} />
			<Slot $ml={2}>
				<SpreadCandleIcon />
			</Slot>
			<Slot $ml={5}>
				<SpreadCandleIcon arrows />
			</Slot>
			<Sep $ml={7} />
			<Slot $ml={3}>
				<StackIcon />
			</Slot>
			<Sep $ml={6} />
			<Slot $ml={4}>
				<ZoomIn size={18} color="#a8b0ba" strokeWidth={1.4} />
			</Slot>
			<Slot $ml={3}>
				<ZoomOut size={18} color="#ccd2da" strokeWidth={1.4} />
			</Slot>
			<Sep $ml={6} />
			<Slot $ml={3} $w={24} $active>
				<DotGridIcon />
			</Slot>
			<Sep $ml={5} />
			<Slot $ml={3}>
				<ChartPlusIcon />
			</Slot>
			<Sep $ml={7} />
			<Slot $ml={4}>
				<BubbleWaveIcon wide />
			</Slot>
			<Overflow>
				<span>»</span>
				<Caret $ml={0} />
			</Overflow>
		</ToolRow>
	);
}

export default function App() {
	return (
		<>
			<GlobalStyle />
			<Frame>
				<TopToolbar />
				<TopStrip />
				<SecondToolbar />
				<Pane $h={309}>
					<PlotColumn>
						<Legend $h={18}>
							<LegendItem $w={62}>KDP - Daily</LegendItem>
							<LegendItem $w={51}>NASDAQ</LegendItem>
							<LegendItem $w={46} $c="#0a7a0a">L=33.71</LegendItem>
							<LegendItem $w={27} $c="#0a7a0a">0.04</LegendItem>
							<LegendItem $w={37} $c="#0a7a0a">0.12%</LegendItem>
							<LegendItem $w={44}>TS=289</LegendItem>
							<LegendItem $w={70}>TE=NASDAQ</LegendItem>
							<LegendItem $w={45}>B=33.57</LegendItem>
							<LegendItem $w={44}>BS=100</LegendItem>
							<LegendItem $w={47}>A=33.71</LegendItem>
							<LegendItem $w={42}>AS=600</LegendItem>
							<LegendItem $w={50} $c="#0a7a0a">O=33.63</LegendItem>
							<LegendItem $w={50}>Hi=33.84</LegendItem>
							<LegendItem $w={52}>Lo=33.58</LegendItem>
							<LegendItem $w={69}>V=6,949,231</LegendItem>
							<LegendItem>sjh_I_SunnyBands$$_22.11.09 (2047,"TS",Close,Cl...</LegendItem>
						</Legend>
						<MainPlot />
					</PlotColumn>
					<AxisColumn $line>
						<PriceAxis />
					</AxisColumn>
				</Pane>
				<Pane $h={206}>
					<PlotColumn>
						<Legend $h={15}>
							<LegendItem $w={420}>sjh_I_DynamicMAV_Hst 21_10_11 (2047,"TS",Close,Close,08,13,0.25,0.25,00,...</LegendItem>
							<LegendItem $w={38} $c="#ff0000">0.1494</LegendItem>
							<LegendItem $c="#a8a8a8">0.0000</LegendItem>
						</Legend>
						<HistPlot />
					</PlotColumn>
					<AxisColumn $line>
						<HistAxis />
					</AxisColumn>
				</Pane>
				<Pane $h={63}>
					<PlotColumn>
						<Legend $h={15}>
							<LegendItem $w={414}>sjh_I_Who'sOnTop_23.05.27 (2047,"TS",Close,Goldenrod,Purple,05,  TRUE,...</LegendItem>
							<LegendItem $c="#e6d060">0.10</LegendItem>
						</Legend>
						<BeadPlot />
					</PlotColumn>
					<AxisColumn $line>
						<BeadAxis />
					</AxisColumn>
				</Pane>
				<Pane $h={27}>
					<PlotColumn>
						<Legend $h={14}>
							<LegendItem>sjh_I_Pennants_21.07.07 ( 2047 , "TS" ,4,1,1,3,...</LegendItem>
						</Legend>
						<PennantPlot />
					</PlotColumn>
					<AxisColumn />
				</Pane>
				<TimeBar>
					<TimeAxis />
					<AxisColumn />
				</TimeBar>
				<ScrollBar>
					<ScrollThumb $w={8} $ml={0} $c="#b4b7c0" />
					<ScrollThumb $w={32} $ml={1017} $c="#9aa3b0" />
					<ScrollThumb $w={8} $ml={0} $c="#c0c5cf" />
				</ScrollBar>
			</Frame>
		</>
	);
}
